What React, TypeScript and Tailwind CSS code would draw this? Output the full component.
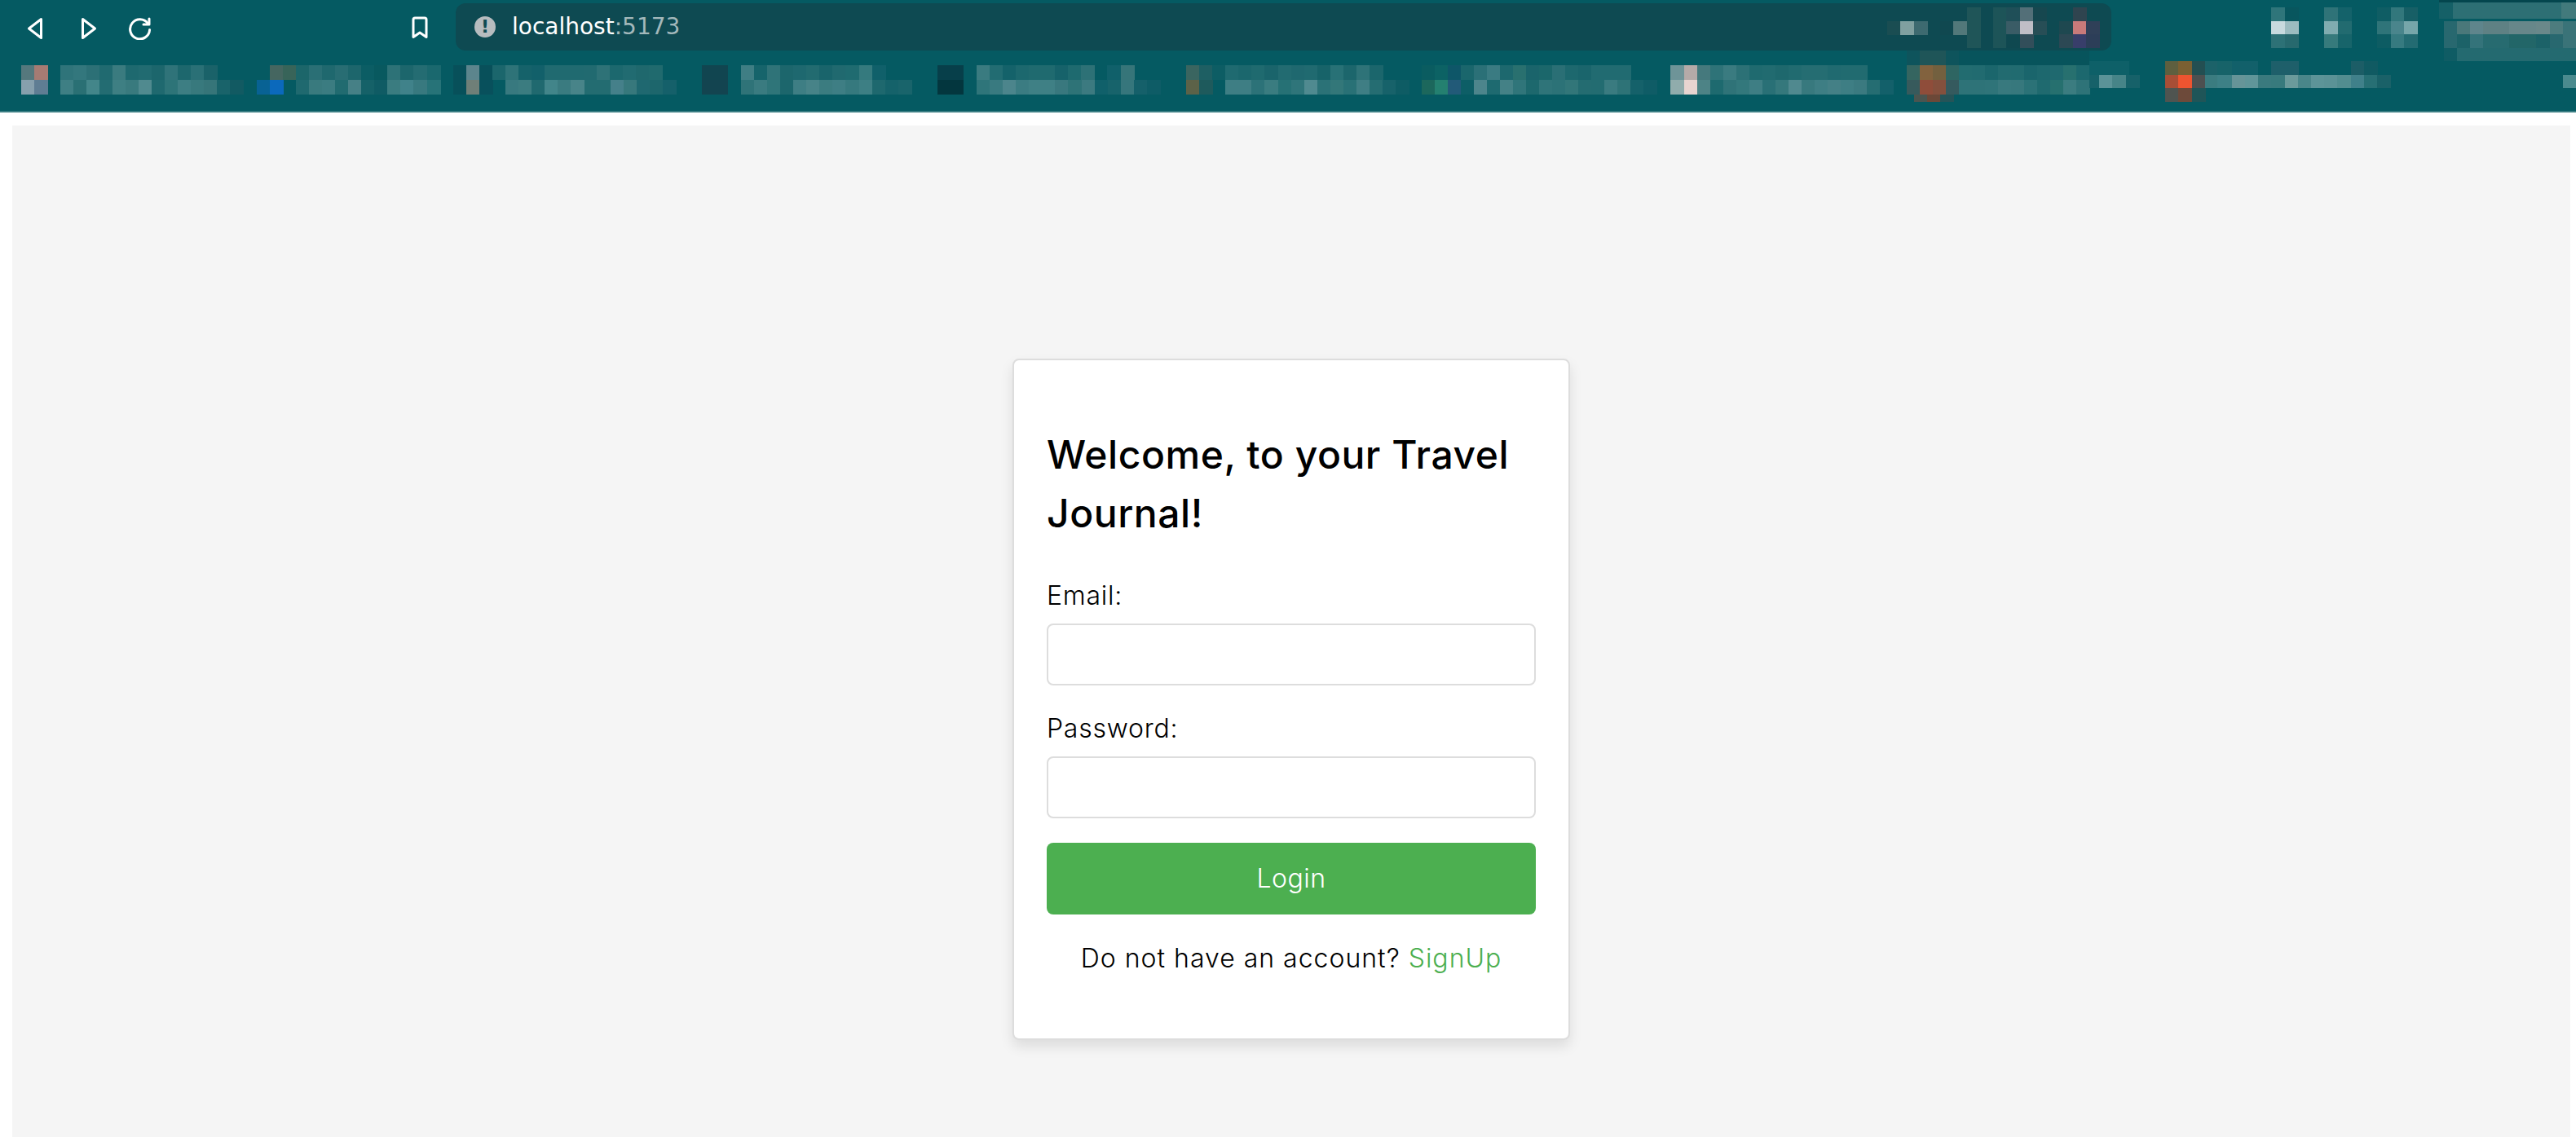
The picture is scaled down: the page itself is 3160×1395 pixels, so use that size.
import React from "react";

type Cell = [number, number, number, number, string];

function row(y: number, h: number, data: string): Cell[] {
  return data
    .trim()
    .split(/\s+/)
    .map((s) => {
      const [x, c, w] = s.split(":");
      return [Number(x), y, w ? Number(w) : 16.5, h, c] as Cell;
    });
}

const MASK_TOP = 62;

const bookmarkCells: Cell[] = [
  ...row(80, 18, `26:#55787d 42:#a67b73 74:#2f747a 90:#33777d 106:#2c7076 122:#206a70 138:#3a7b7f 154:#1e696f 170:#216b71 186:#1c666c 202:#2f7379 218:#1d676d 234:#2a7076 250:#1a6269 331:#456660 347:#386459 363:#1c666a 379:#2a6f75 395:#1f686e 411:#286d73 427:#1d666c 443:#0b5d64 459:#08595f 475:#2d7277 491:#1c666c 507:#246c72
   524:#1a686e 556:#07505a 572:#5c858d 588:#08505a 604:#1b666c 620:#2e7378 636:#15626a 652:#12606a 668:#206a70 684:#206a70 700:#206a70 716:#216a70 732:#2e7277 748:#1c686e 764:#216b71 780:#1f686d 796:#206a6e 861:#114550:32 909:#3f7e84 925:#16646b 941:#2f7378 957:#1c666c 973:#1e686f 989:#226b70 1005:#19646b 1021:#20696f 1037:#1f6b70
   1054:#357a7e 1070:#10606a 1150:#073f4a:32 1198:#3a7b80 1214:#226c72 1230:#14626a 1246:#1c686e 1262:#1f6a6f 1278:#1f6a6f 1294:#16626a 1310:#1e6a6f 1326:#2d7176 1358:#10606a 1375:#367579 1455:#3a6560 1471:#1e5f63 1487:#0d5d64 1503:#1f6a70 1519:#1b676d 1535:#1f6a6f 1551:#1a646b
   1568:#226b71 1584:#1f686f 1600:#206a70 1616:#176369 1632:#287176 1648:#1c666c 1664:#2e7378 1680:#1b666c 1744:#0a5c60 1760:#0c6264 1776:#0e5668 1792:#1a666c 1808:#2b7077 1824:#3a7b82 1840:#1d686e 1856:#29706f 1872:#1a646b 1888:#1b676b 1904:#2a6f75 1920:#1d686e 1936:#1a656c 1952:#216b71 1968:#216b71 1984:#216b71 2049:#6e9498:17 2066:#b5aaa8 2082:#45797d
   2098:#2e7378 2114:#3a7b80 2130:#2c7176 2146:#1f6a6f 2162:#216b70 2178:#1e686d 2194:#216b70 2210:#256d72 2226:#256d72 2242:#206a70 2258:#216b70 2274:#216b70 2339:#356560 2355:#82623e 2371:#73603f 2387:#2e6562 2403:#226c70 2419:#216b70 2435:#1b666c 2451:#226b70 2467:#216b70 2483:#1a656c 2499:#1d686e 2515:#1f696f 2531:#27706f 2547:#1c686e`),
  ...row(98, 18, `26:#87a0ad 42:#5f7d93 74:#3e7f84 90:#2a7074 106:#43868a 122:#236c72 138:#3e7f83 154:#397a7e 170:#508a8f 186:#1f696f 202:#2d7478 218:#3d7e83 234:#38797d 250:#367579 266:#19636a 282:#125a62 315:#086294 331:#0b69bc 363:#1f696f 379:#397a7e 395:#3b7c81 411:#216b70 427:#468086 443:#156168 459:#0f5b64 475:#3a7c80 491:#40828a 507:#38797f
   524:#277378 556:#07505a 572:#6f7f78 588:#08505c 620:#38797f 636:#3b7c80 652:#20696f 668:#42858a 684:#3a7b80 700:#488489 717:#236c71 733:#236c71 749:#45808a 765:#37787c 781:#1f6870 797:#1d666c 813:#15606a 861:#134450:32 909:#2f7378 925:#3a7b80 941:#2f7579 957:#1c666c 973:#3e7e84 989:#478388 1005:#3b7c80 1021:#3e7e84 1037:#36797e
   1054:#3d7f84 1070:#1e686e 1086:#15626a 1102:#19646b 1150:#03363e:32 1198:#2f757a 1214:#397a80 1230:#4c858c 1246:#3b7c82 1262:#3f8085 1278:#3f8085 1294:#39787e 1310:#2e7377 1327:#3c7a80 1343:#10606a 1359:#17636b 1375:#36767c 1391:#15606a 1407:#0e5c66 1455:#5c6248 1471:#1e5a5c 1503:#3e7e84 1519:#3e7e84 1535:#2c7278 1551:#3a7c80
   1568:#267175 1584:#2f757a 1600:#508a90 1616:#2b7277 1632:#337779 1648:#297176 1664:#3f7e84 1680:#256d72 1696:#17626a 1712:#0e5c64 1744:#1c675c 1760:#248070 1776:#225a78 1792:#0d5e66 1808:#4d858c 1824:#1e6a70 1840:#448186 1856:#30757a 1872:#1d686d 1888:#2f7479 1904:#2c7277 1920:#327679 1936:#246c71 1952:#236c71 1968:#3a7b80 1984:#2e7377 2000:#15616a 2016:#0f5c66 2049:#90acac:17 2066:#e8d4d0 2082:#4d8386
   2098:#1e6a6f 2114:#2f7378 2130:#33787c 2146:#3e7e84 2162:#297076 2178:#35787c 2194:#50898f 2210:#38797e 2226:#3e7e84 2242:#448086 2258:#3e7e84 2274:#3b7a80 2290:#256d72 2306:#13606a 2339:#375a5c 2355:#8f4d3a 2371:#84503d 2387:#355a5e 2403:#2e7378 2419:#2e7378 2435:#2f7479 2451:#38797e 2467:#37787d 2483:#2b7277 2499:#1f6a6f 2515:#26706f 2531:#3b7c80 2547:#2e7378`),
  ...row(62, 18, `2339:#0e545c 2355:#1f5558:32 2387:#0e545c 2403:#07545c:160`),
  ...row(116, 9, `2348:#4a5550 2364:#6b4838 2380:#255458`),
  ...row(75, 17, `2563:#0e6068 2579:#0e6068 2595:#0e6068 2656:#5e5f3f 2672:#7b6032 2689:#234f52 2705:#1c6269:15 2720:#176369:18 2738:#12606a:32 2786:#1e5f6a:34 2884:#1c5d66 2900:#105a62`),
  ...row(92, 16, `2563:#166169:12 2575:#5b9398 2591:#478488 2608:#166169 2656:#a84e36 2672:#ee5430 2689:#4d5050 2705:#3b7c80:15 2720:#3d8086:18 2738:#669498 2754:#609599 2770:#3a7a7e 2786:#387a7d:17 2803:#6b9a9b 2819:#4a868a 2835:#5d9498 2851:#5b9296 2867:#528d90:17 2884:#40808a 2900:#276f74 2916:#1a6168:17 3144:#4a8a8e`),
  ...row(108, 17, `2656:#4f5450 2672:#6d4a3a 2689:#1f5558`),
  ...row(59, 16, `2998:#0f5c64:16 3014:#246a70:146`),
].map(([x, y, w, h, c]) => [x, y - MASK_TOP, w, h, c] as Cell);

const URL_LEFT = 2315;
const urlCells: Cell[] = [
  ...row(9, 17, `2413:#1f5558 2445:#1d5458 2461:#1f4f58 2478:#536f78 2494:#16474f 2543:#2f444f`),
  ...row(26, 16.5, `2315:#1a4d52 2331:#80a0a0:17 2348:#3d6a70 2380:#104850 2396:#52787a:17 2413:#1f5558 2445:#1d5458 2461:#3a5c66:17 2478:#c0bec6 2494:#274e56 2526:#1e4850:17 2543:#c87a7a 2559:#2f4058`),
  ...row(42, 17, `2413:#1f5558 2445:#1d5458 2461:#0f4850 2478:#324e5a 2526:#2c4854:17 2543:#383e6a 2559:#2c3e58`),
].map(([x, y, w, h, c]) => [x - URL_LEFT, y - 4, w, h, c] as Cell);

const RIGHT_LEFT = 2786;
const rightCells: Cell[] = [
  ...row(0, 3, `2992:#04464e:168`),
  ...row(3, 20, `2992:#156067:17 3009:#2d6f74:133 3142:#427a7c:18`),
  ...row(9, 17, `2786:#2f757a:17 2803:#08565e 2851:#2f7378:17 2868:#14626a 2916:#0f5d64:17 2933:#32777c 2949:#175f66`),
  ...row(26, 16.5, `2786:#c8dade:17 2803:#9cbcc0 2851:#80acb0:17 2868:#226b70 2916:#2f7479:17 2933:#4a858c 2949:#76a6aa 2998:#28686f 3014:#4a787a 3030:#5f858c 3046:#5f8184 3062:#5f8184 3078:#67878a 3094:#67878a 3111:#6a888a:17 3128:#4d7c7e 3144:#3a7378`),
  ...row(42, 17, `2786:#2d7176:17 2803:#27696e 2851:#367a7c:17 2868:#17646a 2916:#0d5c63:17 2933:#367a80 2949:#236b72 2998:#28686f 3014:#1c6268 3030:#34737a 3046:#276b70 3062:#276b70 3078:#226668 3094:#226668 3111:#1c6268:17 3128:#28686f 3144:#3a7378`),
  ...row(59, 3, `2998:#0f5c64:16 3014:#246a70:146`),
].map(([x, y, w, h, c]) => [x - RIGHT_LEFT, y, w, h, c] as Cell);

function Mosaic({ cells, width, height, className }: { cells: Cell[]; width: number; height: number; className?: string }) {
  return (
    <svg width={width} height={height} viewBox={`0 0 ${width} ${height}`} shapeRendering="crispEdges" className={className}>
      {cells.map(([x, y, w, h, c], i) => (
        <rect key={i} x={x} y={y} width={w} height={h} fill={c} />
      ))}
    </svg>
  );
}

function Field({ label, type, className }: { label: string; type: string; className?: string }) {
  return (
    <div className={className}>
      <label className="block h-[48px] text-[32px] leading-[48px] font-light tracking-[0.75px] text-black">{label}</label>
      <input
        type={type}
        className="mt-[10px] block h-[76px] w-full rounded-[8px] border-2 border-[#dddddd] bg-white"
      />
    </div>
  );
}

export default function App() {
  return (
    <div className="h-screen overflow-hidden bg-white font-['Inter',sans-serif]">
      <header className="h-[138px] border-b-2 border-[#3a7d83] bg-[#055a62]">
        <div className="flex h-[62px] items-start">
          <svg width="20" height="28" viewBox="0 0 20 28" className="mt-[21px] ml-[33px] text-white" fill="none" stroke="currentColor" strokeWidth="3" strokeLinejoin="round">
            <path d="M17.5 2.5 L2.5 14 L17.5 25.5 Z" />
          </svg>
          <svg width="20" height="28" viewBox="0 0 20 28" className="mt-[21px] ml-[46px] text-white" fill="none" stroke="currentColor" strokeWidth="3" strokeLinejoin="round">
            <path d="M2.5 2.5 L17.5 14 L2.5 25.5 Z" />
          </svg>
          <svg width="30" height="28" viewBox="0 0 30 28" className="mt-[21px] ml-[38px] text-white" fill="none" stroke="currentColor" strokeWidth="3" strokeLinecap="round" strokeLinejoin="round">
            <path d="M24.5 8 A 12 12 0 1 0 26.6 15.5" />
            <path d="M26 2 V 9 H 19" />
          </svg>
          <svg width="22" height="28" viewBox="0 0 22 28" className="mt-[20px] ml-[317px] text-white" fill="none" stroke="currentColor" strokeWidth="3" strokeLinejoin="round">
            <path d="M3 4 Q3 2 5 2 H17 Q19 2 19 4 V25.5 L11 20 L3 25.5 Z" />
          </svg>
          <div className="mt-[4px] ml-[33px] flex h-[58px] w-[2031px] items-center rounded-[12px] bg-[#0e4a52] pl-[23px] font-['DejaVu_Sans',sans-serif]">
            <span className="flex h-[26px] w-[26px] items-center justify-center rounded-full bg-[#b7bcbf] text-[22px] leading-none font-bold text-[#0e4a52]">!</span>
            <span className="ml-[20px] text-[28px] leading-[58px] text-white">
              localhost<span className="text-[#a3b8bb]">:5173</span>
            </span>
            <Mosaic cells={urlCells} width={275} height={58} className="ml-auto" />
          </div>
          <Mosaic cells={rightCells} width={374} height={62} className="ml-[196px]" />
        </div>
        <Mosaic cells={bookmarkCells} width={3160} height={74} className="block" />
      </header>

      <main className="mt-[16px] ml-[15px] flex h-[1408px] w-[3138px] items-center justify-center bg-[#f5f5f5]">
        <div className="w-[684px] rounded-[8px] border-2 border-[#dddddd] bg-white px-[40px] pt-[40px] pb-[40px] shadow-[0_8px_16px_rgba(0,0,0,0.1)]">
          <h2 className="mt-[40px] mb-[41px] text-[48px] leading-[72px] font-medium tracking-[0.55px] text-black">
            Welcome, to your Travel Journal!
          </h2>
          <Field label="Email:" type="email" />
          <Field label="Password:" type="password" className="mt-[29px]" />
          <button className="mt-[30px] block h-[88px] w-full rounded-[8px] bg-[#4caf50] text-[32px] font-light tracking-[0.5px] text-white">
            Login
          </button>
          <p className="mt-[30px] mb-[34px] text-center text-[32px] leading-[48px] font-light tracking-[1px] text-black">
            Do not have an account? <a className="text-[#4caf50]">SignUp</a>
          </p>
        </div>
      </main>
    </div>
  );
}
